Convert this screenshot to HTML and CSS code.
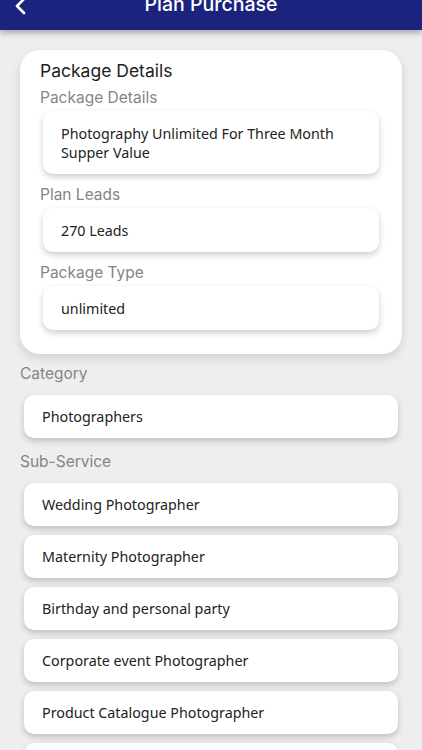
FILE: index.html
```html
<!DOCTYPE html>
<html>
<head>
<meta charset="utf-8">
<link rel="stylesheet" href="styles.css">
</head>
<body>
<header class="topbar">
  <div class="back">
    <svg width="14" height="18" viewBox="0 0 14 18"><polyline points="10,1 3,8 10,15" fill="none" stroke="#fff" stroke-width="2.6" stroke-linecap="round" stroke-linejoin="round"/></svg>
  </div>
  <div class="title">Plan Purchase</div>
  <div></div>
</header>
<main class="content">
  <section class="card">
    <div class="card-title">Package Details</div>
    <div class="label">Package Details</div>
    <div class="field">Photography Unlimited For Three Month Supper Value</div>
    <div class="label gap">Plan Leads</div>
    <div class="field">270 Leads</div>
    <div class="label gap">Package Type</div>
    <div class="field">unlimited</div>
  </section>
  <div class="label outer first">Category</div>
  <div class="list">
    <div class="field wide">Photographers</div>
  </div>
  <div class="label outer">Sub-Service</div>
  <div class="list">
    <div class="field wide">Wedding Photographer</div>
    <div class="field wide">Maternity Photographer</div>
    <div class="field wide">Birthday and personal party</div>
    <div class="field wide">Corporate event Photographer</div>
    <div class="field wide">Product Catalogue Photographer</div>
    <div class="field wide">&nbsp;</div>
  </div>
</main>
</body>
</html>
```
FILE: styles.css
```css
html, body {
  margin: 0;
  padding: 0;
  background: #eeeeee;
  overflow: hidden;
  height: 750px;
}
body {
  font-family: "Noto Sans", "Open Sans", sans-serif;
}
.topbar {
  height: 30px;
  background: #1c237e;
  box-shadow: 0 3px 6px rgba(0,0,0,0.3);
  display: grid;
  grid-template-columns: 1fr auto 1fr;
  align-items: start;
  position: relative;
  z-index: 2;
}
.back {
  padding-left: 14px;
  margin-top: -2px;
}
.back svg { display: block; }
.title {
  color: #fff;
  font-family: Inter, Roboto, sans-serif;
  font-size: 19.5px;
  font-weight: 500;
  line-height: 22px;
  margin-top: -7px;
}
.content {
  padding: 20px 20px 0;
}
.card {
  background: #fff;
  border-radius: 20px;
  box-shadow: 0 4px 10px rgba(0,0,0,0.13);
  padding: 11px 23px 24px 20px;
}
.card-title {
  font-family: Inter, Roboto, sans-serif;
  font-size: 17.5px;
  line-height: 20px;
  color: #222;
  margin-bottom: 7px;
}
.label {
  font-family: Inter, Roboto, sans-serif;
  font-size: 15.5px;
  line-height: 20px;
  color: #858585;
  margin-bottom: 3px;
}
.label.gap { margin-top: 11px; }
.label.outer { margin-top: 14px; margin-bottom: 11px; }
.label.outer.first { margin-top: 10px; }
.field {
  background: #fff;
  border-radius: 10px;
  box-shadow: 0 3px 6px rgba(0,0,0,0.2);
  padding: 12.5px 18px;
  font-size: 14.3px;
  line-height: 19px;
  color: #222;
  margin-left: 3px;
}
.list {
  display: flex;
  flex-direction: column;
  gap: 9px;
}
.field.wide {
  margin: 0 4px;
  padding: 12px 18px;
}
```
